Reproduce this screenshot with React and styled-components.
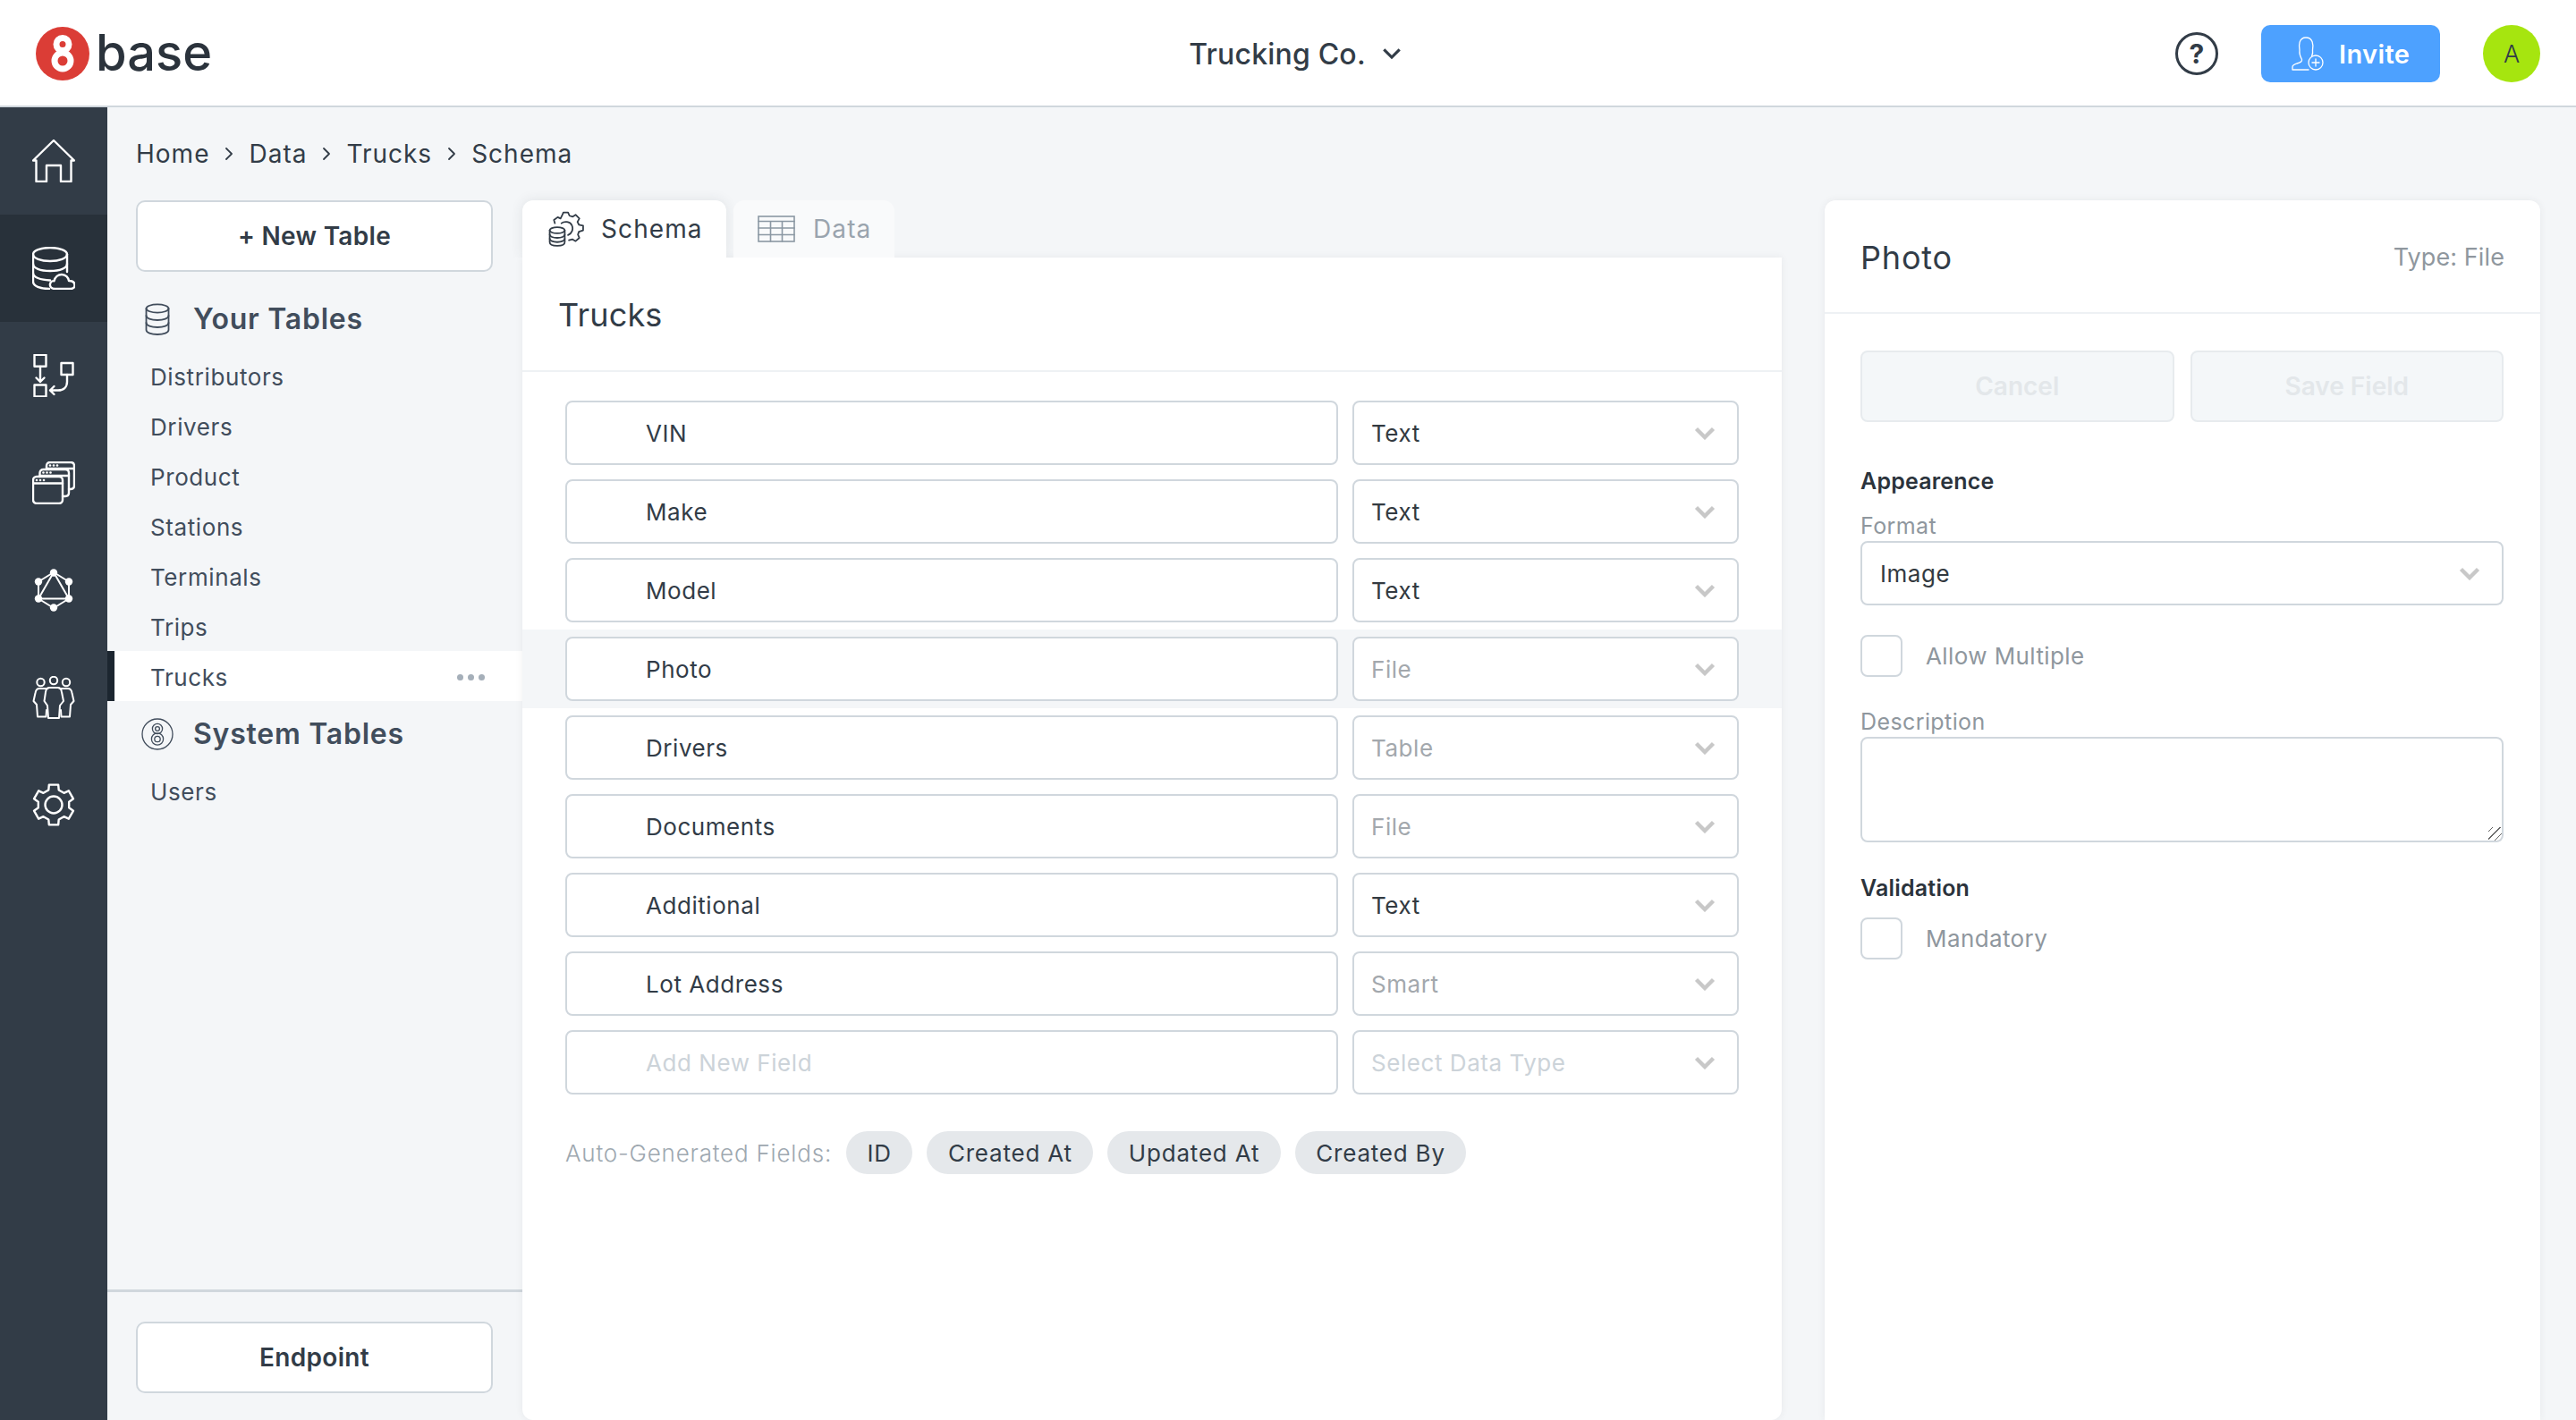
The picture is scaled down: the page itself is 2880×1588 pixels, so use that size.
import React from 'react';
import styled, { createGlobalStyle } from 'styled-components';

const GlobalStyle = createGlobalStyle`
  * { box-sizing: border-box; }
  html, body { margin: 0; padding: 0; height: 100%; }
  body {
    font-family: Inter, "Open Sans", sans-serif;
    background: #f4f6f8;
    color: #323c47;
    overflow: hidden;
  }
`;

const Page = styled.div`
  height: 1588px;
  display: flex;
  flex-direction: column;
  overflow: hidden;
`;

const Header = styled.header`
  flex: 0 0 120px;
  display: grid;
  grid-template-columns: 1fr auto 1fr;
  align-items: center;
  padding: 2px 40px 0 40px;
  background: #fff;
  border-bottom: 2px solid #d0d7dd;
`;

const Logo = styled.div`
  display: flex;
  align-items: center;
  gap: 7px;
`;

const LogoWord = styled.span`
  font-size: 56px;
  line-height: 60px;
  font-weight: 500;
  letter-spacing: 0;
  color: #2b333c;
  margin-top: -2px;
`;

const Company = styled.div`
  display: flex;
  align-items: center;
  gap: 18px;
  margin-left: 16px;
  font-size: 32px;
  font-weight: 500;
  letter-spacing: 0.2px;
  color: #323c47;
`;

const HeaderActions = styled.div`
  display: flex;
  justify-content: flex-end;
  align-items: center;
`;

const Help = styled.div`
  width: 48px;
  height: 48px;
  border-radius: 50%;
  border: 3px solid #323c47;
  display: flex;
  align-items: center;
  justify-content: center;
  font-size: 30px;
  font-weight: 700;
  color: #323c47;
  margin-right: 48px;
`;

const InviteButton = styled.button`
  width: 200px;
  height: 64px;
  border: none;
  border-radius: 10px;
  background: #4da1ff;
  color: #fff;
  font-family: Inter, sans-serif;
  font-size: 29px;
  font-weight: 600;
  letter-spacing: 0.4px;
  display: flex;
  align-items: center;
  padding: 0 0 0 34px;
  gap: 17px;
  margin-right: 48px;
`;

const Avatar = styled.div`
  width: 64px;
  height: 64px;
  border-radius: 50%;
  background: #a6e50f;
  display: flex;
  align-items: center;
  justify-content: center;
  font-size: 27px;
  font-weight: 300;
  color: #323c47;
`;

const Body = styled.div`
  flex: 1;
  display: flex;
  min-height: 0;
`;

const Nav = styled.nav`
  flex: 0 0 120px;
  background: #323c47;
`;

const NavItem = styled.div`
  height: 120px;
  display: flex;
  align-items: center;
  justify-content: center;
  background: ${p => (p.$active ? '#28313a' : 'transparent')};
`;

const Content = styled.div`
  flex: 1;
  display: flex;
  flex-direction: column;
  min-width: 0;
`;

const Breadcrumbs = styled.div`
  flex: 0 0 104px;
  display: flex;
  align-items: center;
  padding: 0 0 0 32px;
  font-size: 28px;
  letter-spacing: 1px;
  color: #323c47;
`;

const CrumbSep = styled.span`
  width: 44px;
  display: flex;
  justify-content: center;
`;

const Columns = styled.div`
  flex: 1;
  display: flex;
  min-height: 0;
`;

const TablesColumn = styled.aside`
  flex: 0 0 464px;
  display: flex;
  flex-direction: column;
`;

const TablesTop = styled.div`
  flex: 1;
  padding-bottom: 16px;
`;

const OutlineButton = styled.button`
  display: block;
  width: 399px;
  height: 80px;
  margin: 0 auto 0 32px;
  background: #fff;
  border: 2px solid #d0d7dd;
  border-radius: 10px;
  font-family: Inter, sans-serif;
  font-size: 28px;
  font-weight: 600;
  letter-spacing: 0.3px;
  color: #323c47;
`;

const SectionTitle = styled.div`
  height: 72px;
  display: flex;
  align-items: center;
  padding: 1px 0 0 ${p => p.$pad || 42}px;
  gap: ${p => p.$gap || 26}px;
  font-size: 32px;
  font-weight: 600;
  letter-spacing: 0.75px;
  color: #414d5c;
  margin-top: ${p => p.$top || 0}px;
`;

const TableItem = styled.div`
  height: 56px;
  display: flex;
  align-items: center;
  justify-content: space-between;
  padding: 2px 42px 0 ${p => (p.$active ? 40 : 48)}px;
  font-size: 26px;
  letter-spacing: 0.6px;
  color: #414d5c;
  background: ${p => (p.$active ? '#fff' : 'transparent')};
  border-left: ${p => (p.$active ? '8px solid #1c2630' : 'none')};
`;

const Dots = styled.span`
  display: flex;
  gap: 5px;

  i {
    width: 7px;
    height: 7px;
    border-radius: 50%;
    background: #a5afb9;
  }
`;

const TablesBottom = styled.div`
  border-top: 3px solid #d0d7dd;
  padding: 33px 0 30px;
`;

const Main = styled.main`
  flex: 0 0 1408px;
  display: flex;
  flex-direction: column;
  min-height: 0;
`;

const Tabs = styled.div`
  flex: 0 0 64px;
  display: flex;
  gap: 8px;
`;

const Tab = styled.div`
  height: 64px;
  width: ${p => p.$width}px;
  display: flex;
  align-items: center;
  padding-left: ${p => p.$pad}px;
  gap: ${p => p.$gap}px;
  border-radius: 12px 12px 0 0;
  background: ${p => (p.$active ? '#fff' : '#f9fafb')};
  color: ${p => (p.$active ? '#323c47' : '#9aa4ae')};
  box-shadow: ${p => (p.$active ? '0 0 14px rgba(50, 60, 71, 0.1)' : 'none')};
  clip-path: inset(-14px -14px 0 -14px);
  font-size: 28px;
  letter-spacing: 1.1px;
`;

const Panel = styled.section`
  flex: 1;
  background: #fff;
  border-radius: 0 0 12px 12px;
  box-shadow: 0 0 8px rgba(50, 60, 71, 0.07);
  display: flex;
  flex-direction: column;
`;

const PanelHeader = styled.div`
  flex: 0 0 128px;
  display: flex;
  align-items: center;
  padding: 2px 40px 0;
  font-size: 36px;
  letter-spacing: 0.2px;
  color: #323c47;
  border-bottom: 2px solid #eef1f4;
`;

const Fields = styled.div`
  padding-top: 24px;
`;

const FieldRow = styled.div`
  height: 88px;
  display: flex;
  align-items: center;
  gap: 16px;
  padding: 0 48px;
  background: ${p => (p.$selected ? '#f4f6f8' : 'transparent')};
`;

const NameInput = styled.input`
  flex: 0 0 864px;
  height: 72px;
  padding: 0 20px 0 88px;
  border: 2px solid #d0d7dd;
  border-radius: 8px;
  background: #fff;
  outline: none;
  font-family: Inter, sans-serif;
  font-size: 26px;
  letter-spacing: 0.55px;
  color: #323c47;

  &::placeholder {
    color: #ccd3d9;
    opacity: 1;
  }
`;

const SelectBox = styled.div`
  flex: ${p => (p.$full ? '0 0 72px' : '0 0 432px')};
  height: 72px;
  padding: 0 24px 0 ${p => (p.$full ? 20 : 19)}px;
  display: flex;
  align-items: center;
  justify-content: space-between;
  border: 2px solid #d0d7dd;
  border-radius: 8px;
  background: #fff;
  font-size: 26px;
  letter-spacing: 0.55px;
  color: ${p => (p.$tone === 'muted' ? '#a3a8ad' : p.$tone === 'empty' ? '#ccd3d9' : '#333a41')};
`;

const AutoFields = styled.div`
  display: flex;
  align-items: center;
  padding: 33px 48px 0;
  font-size: 26px;
  font-weight: 300;
  letter-spacing: 0.8px;
  color: #9ea8b0;
`;

const AutoLabel = styled.span`
  margin-right: 16px;
`;

const Chip = styled.span`
  height: 48px;
  display: flex;
  align-items: center;
  padding: 0 23.5px;
  margin-right: 16px;
  border-radius: 24px;
  background: #e5e8eb;
  font-weight: 400;
  letter-spacing: 0.8px;
  color: #323c47;
`;

const Inspector = styled.section`
  flex: 0 0 800px;
  margin-left: 48px;
  background: #fff;
  border-radius: 12px 12px 0 0;
  box-shadow: 0 0 8px rgba(50, 60, 71, 0.07);
  display: flex;
  flex-direction: column;
`;

const InspectorHeader = styled.div`
  flex: 0 0 127px;
  display: flex;
  align-items: center;
  justify-content: space-between;
  padding: 2px 40px 0;
  border-bottom: 2px solid #eef1f4;
`;

const InspectorTitle = styled.span`
  font-size: 36px;
  letter-spacing: 0.8px;
  color: #323c47;
`;

const InspectorType = styled.span`
  font-size: 27px;
  letter-spacing: 0.1px;
  color: #8f979e;
`;

const InspectorBody = styled.div`
  padding: 41px 41px 0 40px;
  display: flex;
  flex-direction: column;
`;

const ButtonRow = styled.div`
  display: flex;
  gap: 18px;
  margin-bottom: 47px;
`;

const DisabledButton = styled.button`
  flex: 1;
  height: 80px;
  background: #f4f7f9;
  border: 2px solid #e7ebee;
  border-radius: 8px;
  font-family: Inter, sans-serif;
  font-size: 28px;
  font-weight: 600;
  color: #e3e7ea;
`;

const GroupTitle = styled.div`
  height: 38px;
  line-height: 38px;
  margin-top: ${p => p.$top || 0}px;
  font-size: 25px;
  font-weight: 600;
  letter-spacing: 0.2px;
  color: #2b333c;
`;

const FieldLabel = styled.div`
  height: 34px;
  line-height: 34px;
  margin-top: ${p => p.$top || 0}px;
  font-size: 25px;
  letter-spacing: 0.4px;
  color: #8f979e;
`;

const CheckRow = styled.label`
  display: flex;
  align-items: center;
  gap: 26px;
  margin-top: ${p => p.$top}px;
  font-size: 26px;
  letter-spacing: 0.4px;
  color: #8f979e;
`;

const CheckBox = styled.span`
  width: 47px;
  height: 47px;
  border: 2px solid #d0d7dd;
  border-radius: 8px;
  background: #fff;
`;

const Notes = styled.textarea`
  display: block;
  width: 100%;
  height: 118px;
  border: 2px solid #d0d7dd;
  border-radius: 8px;
  background: #fff;
  outline: none;

  &::-webkit-resizer {
    background: repeating-linear-gradient(
      135deg,
      transparent 0,
      transparent 3px,
      #666 3px,
      #666 4px,
      transparent 4px,
      transparent 6px
    );
  }
`;

const Icon = ({ size = 48, w, h, box = '0 0 48 48', color = '#fff', stroke = 2.4, children }) => (
  <svg
    width={w || size}
    height={h || size}
    viewBox={box}
    fill="none"
    stroke={color}
    strokeWidth={stroke}
    strokeLinecap="round"
    strokeLinejoin="round"
    style={{ flex: 'none' }}
  >
    {children}
  </svg>
);

const gearPoints = (cx, cy, outer, inner, teeth = 6) => {
  const pts = [];
  const step = 360 / teeth;
  for (let i = 0; i < teeth; i++) {
    const a = -90 + i * step;
    [[-13, outer], [13, outer], [19, inner], [step - 19, inner]].forEach(([off, r]) => {
      const rad = ((a + off) * Math.PI) / 180;
      pts.push(`${(cx + r * Math.cos(rad)).toFixed(2)},${(cy + r * Math.sin(rad)).toFixed(2)}`);
    });
  }
  return pts.join(' ');
};

const HomeIcon = () => (
  <Icon>
    <path d="M24 1 L47 23.5 H43.5 V47 H32 V29 H16 V47 H4.5 V23.5 H1 Z" />
  </Icon>
);

const DataIcon = () => (
  <Icon>
    <ellipse cx="20" cy="8.5" rx="19" ry="7.5" />
    <path d="M1 8.5 V39 C1 44 9 47 19 47" />
    <path d="M39 8.5 V28" />
    <path d="M1 19 C1 24 9 27 20 27 S39 24 39 19" />
    <path d="M1 29.5 C1 34 9 37 20 37.5" />
    <path d="M25.5 47 C21 47 19.5 44 20 41.5 C20.5 39 23 38 24.5 38.2 C25.5 34 29 31 33 31 C37.5 31 40.5 34.5 41 38 C45 38 47.5 40 47.5 43 C47.5 45.5 45.5 47 43 47 Z" />
  </Icon>
);

const FlowIcon = () => (
  <Icon>
    <rect x="2.5" y="0.8" width="13" height="13" />
    <rect x="32.5" y="10" width="13" height="13" />
    <rect x="2.5" y="34.5" width="13" height="13" />
    <path d="M9 14 V31 M4.5 26.5 L9 31 L13.5 26.5" />
    <path d="M39 23 V31 C39 37 35 40.5 29 40.5 H20 M24.5 36 L20 40.5 L24.5 45" />
  </Icon>
);

const WindowsIcon = () => (
  <Icon>
    <rect x="1" y="17" width="33" height="30" rx="4" />
    <path d="M1 24.5 H34" />
    <path d="M8.5 17 V13 C8.5 10.5 10 9 12.5 9 H37 C39.5 9 41 10.5 41 13 V35 C41 37.5 39.5 39 37 39 H34" />
    <path d="M8.5 16 H41" />
    <path d="M16 9 V5 C16 2.5 17.5 1 20 1 H43 C45.5 1 47 2.5 47 5 V27 C47 29.5 45.5 31 43 31 H41" />
    <path d="M16 8 H47" />
    <g fill="#fff" stroke="none">
      <circle cx="5" cy="21" r="1.3" /><circle cx="9" cy="21" r="1.3" /><circle cx="13" cy="21" r="1.3" />
      <circle cx="12.5" cy="12.5" r="1.3" /><circle cx="16.5" cy="12.5" r="1.3" /><circle cx="20.5" cy="12.5" r="1.3" />
      <circle cx="20" cy="4.5" r="1.3" /><circle cx="24" cy="4.5" r="1.3" /><circle cx="28" cy="4.5" r="1.3" />
    </g>
  </Icon>
);

const GraphIcon = () => (
  <Icon stroke={2}>
    <path d="M24 4 L41 14.5 V33.5 L24 44 L7 33.5 V14.5 Z" />
    <path d="M24 4 L41 33.5 H7 Z" />
    <g fill="#fff" stroke="none">
      <circle cx="24" cy="4.5" r="4.2" />
      <circle cx="41" cy="14.5" r="4.2" />
      <circle cx="41" cy="33.5" r="4.2" />
      <circle cx="24" cy="43.5" r="4.2" />
      <circle cx="7" cy="33.5" r="4.2" />
      <circle cx="7" cy="14.5" r="4.2" />
    </g>
  </Icon>
);

const PeopleIcon = () => (
  <Icon stroke={2}>
    <circle cx="9.5" cy="7" r="4.2" />
    <circle cx="24" cy="5" r="4.2" />
    <circle cx="38" cy="7" r="4.2" />
    <path d="M17.5 14 H8 C5 14 4 16 3.5 19 L1.5 28 L5 32 L6 45.5 H15.5 L16 38" />
    <path d="M30.5 14 H40 C43 14 44 16 44.5 19 L46.5 28 L43 32 L42 45.5 H32.5 L32 38" />
    <path d="M19 13 H29 C31.5 13 32.5 15 33 18 L35 28 L31 33 L30 47 H18 L17 33 L13.5 28 L15 18 C15.5 15 16.5 13 19 13 Z" />
  </Icon>
);

const GearIcon = ({ color = '#fff', stroke = 2.4 }) => (
  <Icon color={color} stroke={stroke}>
    <polygon points={gearPoints(24, 24, 23, 17.5)} />
    <circle cx="24" cy="24" r="9.5" />
  </Icon>
);

const SmallDbIcon = () => (
  <Icon w={28} h={36} box="0 0 28 36" color="#414d5c" stroke={1.8}>
    <ellipse cx="14" cy="6" rx="12.5" ry="4.6" />
    <path d="M1.5 6 V30 C1.5 33 7 35 14 35 S26.5 33 26.5 30 V6" />
    <path d="M1.5 14 C1.5 17 7 19 14 19 S26.5 17 26.5 14" />
    <path d="M1.5 22 C1.5 25 7 27 14 27 S26.5 25 26.5 22" />
  </Icon>
);

const SystemIcon = () => (
  <Icon size={36} box="0 0 36 36" color="#414d5c" stroke={1.3}>
    <circle cx="18" cy="18" r="17" />
    <circle cx="18" cy="12" r="5.6" />
    <circle cx="18" cy="12" r="2.4" />
    <circle cx="18" cy="23.5" r="6.6" />
    <circle cx="18" cy="23.5" r="3.2" />
  </Icon>
);

const SchemaTabIcon = () => (
  <Icon w={40} h={40} box="0 0 38 38" color="#323c47" stroke={1.7}>
    <path d="M7 13 L6 9.5 L10 6.5 L13 8 L15 4 L16 1.5 H21 L22.5 5 L26 6 L29 4 L33 8 L31 11.5 L32.5 14.5 L37 15.5 V20.5 L32.5 22 L31.5 25 L33 28.5 L29 32 L25.5 30 L22 31" />
    <path d="M14 13 C17 10.5 23 11 25 15 C27 19 25 24 21 25.5" />
    <ellipse cx="9.5" cy="20.5" rx="8" ry="3.2" />
    <path d="M1.5 20.5 V33 C1.5 35.5 5 37 9.5 37 S17.5 35.5 17.5 33 V20.5" />
    <path d="M1.5 25 C1.5 27 5 28.5 9.5 28.5 S17.5 27 17.5 25" />
    <path d="M1.5 29.5 C1.5 31.5 5 33 9.5 33 S17.5 31.5 17.5 29.5" />
  </Icon>
);

const TableTabIcon = () => (
  <Icon w={42} h={30} box="0 0 42 30" color="#8b98a3" stroke={1.6}>
    <rect x="1" y="1" width="40" height="28" strokeLinejoin="miter" />
    <path d="M1 6.5 H41 M1 14 H41 M1 21.5 H41 M14.5 6.5 V29 M27.5 6.5 V29" />
  </Icon>
);

const InviteIcon = () => (
  <Icon w={36} h={38} box="0 0 36 38" stroke={1.3}>
    <path d="M19 37 H1 V34 C1 31.5 3 31 6 30 C10 29 12 27.5 11.5 25.5 C9.5 22 8.5 19 9 15 C8 10 8 1 16 1 C24 1 24.5 9 23.5 15 C24 18 23.5 20 22.5 22" />
    <circle cx="27" cy="29" r="8" />
    <path d="M27 25 V33 M23 29 H31" />
  </Icon>
);

const Chevron = ({ color = '#c8c8c8', w = 24, h = 15, stroke = 4.4 }) => (
  <Icon w={w} h={h} box="0 0 24 15" color={color} stroke={stroke}>
    <path d="M2.5 2.5 L12 12 L21.5 2.5" strokeLinecap="butt" strokeLinejoin="miter" />
  </Icon>
);

const CrumbArrow = () => (
  <Icon w={10} h={16} box="0 0 10 16" color="#323c47" stroke={1.8}>
    <path d="M2 2 L8 8 L2 14" />
  </Icon>
);

const navIcons = [HomeIcon, DataIcon, FlowIcon, WindowsIcon, GraphIcon, PeopleIcon, GearIcon];
const crumbs = ['Home', 'Data', 'Trucks', 'Schema'];
const tables = ['Distributors', 'Drivers', 'Product', 'Stations', 'Terminals', 'Trips', 'Trucks'];
const fields = [
  { name: 'VIN', type: 'Text' },
  { name: 'Make', type: 'Text' },
  { name: 'Model', type: 'Text' },
  { name: 'Photo', type: 'File', muted: true, selected: true },
  { name: 'Drivers', type: 'Table', muted: true },
  { name: 'Documents', type: 'File', muted: true },
  { name: 'Additional', type: 'Text' },
  { name: 'Lot Address', type: 'Smart', muted: true },
];
const autoFields = ['ID', 'Created At', 'Updated At', 'Created By'];

const App = () => (
  <Page>
    <GlobalStyle />
    <Header>
      <Logo>
        <svg width="60" height="60" viewBox="0 0 60 60">
          <circle cx="30" cy="30" r="30" fill="#db3d36" />
          <circle cx="30" cy="19.5" r="7" fill="none" stroke="#fff" strokeWidth="7" />
          <circle cx="30" cy="38" r="9" fill="none" stroke="#fff" strokeWidth="7" />
        </svg>
        <LogoWord>base</LogoWord>
      </Logo>
      <Company>
        Trucking Co.
        <Chevron color="#323c47" w={22} h={14} stroke={3.4} />
      </Company>
      <HeaderActions>
        <Help>?</Help>
        <InviteButton>
          <InviteIcon />
          Invite
        </InviteButton>
        <Avatar>A</Avatar>
      </HeaderActions>
    </Header>
    <Body>
      <Nav>
        {navIcons.map((NavIcon, i) => (
          <NavItem key={i} $active={i === 1}>
            <NavIcon />
          </NavItem>
        ))}
      </Nav>
      <Content>
        <Breadcrumbs>
          {crumbs.map((crumb, i) => (
            <React.Fragment key={crumb}>
              {i > 0 && (
                <CrumbSep>
                  <CrumbArrow />
                </CrumbSep>
              )}
              <span>{crumb}</span>
            </React.Fragment>
          ))}
        </Breadcrumbs>
        <Columns>
          <TablesColumn>
            <TablesTop>
              <OutlineButton>+ New Table</OutlineButton>
              <SectionTitle $top={16}>
                <SmallDbIcon />
                Your Tables
              </SectionTitle>
              {tables.map(table => (
                <TableItem key={table} $active={table === 'Trucks'}>
                  {table}
                  {table === 'Trucks' && (
                    <Dots>
                      <i />
                      <i />
                      <i />
                    </Dots>
                  )}
                </TableItem>
              ))}
              <SectionTitle $pad={38} $gap={22}>
                <SystemIcon />
                System Tables
              </SectionTitle>
              <TableItem>Users</TableItem>
            </TablesTop>
            <TablesBottom>
              <OutlineButton>Endpoint</OutlineButton>
            </TablesBottom>
          </TablesColumn>
          <Main>
            <Tabs>
              <Tab $active $width={228} $pad={29} $gap={19}>
                <SchemaTabIcon />
                Schema
              </Tab>
              <Tab $width={180} $pad={27} $gap={20}>
                <TableTabIcon />
                Data
              </Tab>
            </Tabs>
            <Panel>
              <PanelHeader>Trucks</PanelHeader>
              <Fields>
                {fields.map(field => (
                  <FieldRow key={field.name} $selected={field.selected}>
                    <NameInput readOnly value={field.name} />
                    <SelectBox $tone={field.muted ? 'muted' : undefined}>
                      {field.type}
                      <Chevron />
                    </SelectBox>
                  </FieldRow>
                ))}
                <FieldRow>
                  <NameInput placeholder="Add New Field" />
                  <SelectBox $tone="empty">
                    Select Data Type
                    <Chevron />
                  </SelectBox>
                </FieldRow>
              </Fields>
              <AutoFields>
                <AutoLabel>Auto-Generated Fields:</AutoLabel>
                {autoFields.map(name => (
                  <Chip key={name}>{name}</Chip>
                ))}
              </AutoFields>
            </Panel>
          </Main>
          <Inspector>
            <InspectorHeader>
              <InspectorTitle>Photo</InspectorTitle>
              <InspectorType>Type: File</InspectorType>
            </InspectorHeader>
            <InspectorBody>
              <ButtonRow>
                <DisabledButton disabled>Cancel</DisabledButton>
                <DisabledButton disabled>Save Field</DisabledButton>
              </ButtonRow>
              <GroupTitle>Appearence</GroupTitle>
              <FieldLabel $top={14}>Format</FieldLabel>
              <SelectBox $full>
                Image
                <Chevron />
              </SelectBox>
              <CheckRow $top={33}>
                <CheckBox />
                Allow Multiple
              </CheckRow>
              <FieldLabel $top={33}>Description</FieldLabel>
              <Notes />
              <GroupTitle $top={32}>Validation</GroupTitle>
              <CheckRow $top={14}>
                <CheckBox />
                Mandatory
              </CheckRow>
            </InspectorBody>
          </Inspector>
        </Columns>
      </Content>
    </Body>
  </Page>
);

export default App;
